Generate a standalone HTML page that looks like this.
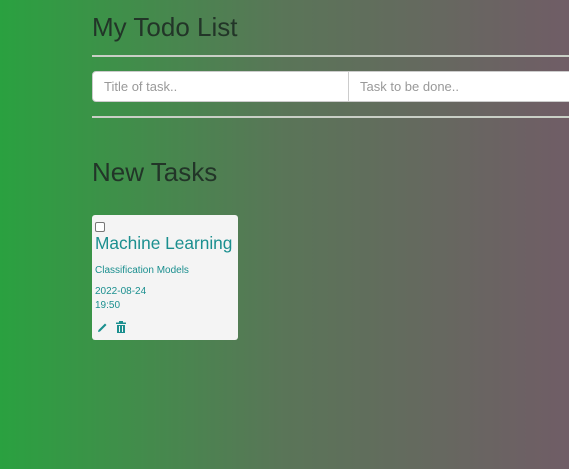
<!DOCTYPE html>
<html><head><style>
body{margin:0;width:569px;height:469px;overflow:hidden;background:linear-gradient(to right,#2aa140 0%,#3e9049 20%,#5a7558 50%,#705d66 100%);font-family:"Liberation Sans",sans-serif;position:relative}
.a{position:absolute}
h1{position:absolute;margin:0;font-weight:normal;font-size:26px;color:#223528;left:92px}
.hr{position:absolute;left:92px;right:0;height:1.5px;background:#c9cfc6}
.in{position:absolute;top:71px;height:31px;background:#fff;border:1px solid #ccc;box-sizing:border-box;font-size:13px;color:#999;line-height:30px;padding-left:11px}
.card{position:absolute;left:92px;top:215px;width:146px;height:125px;background:#f4f4f4;border-radius:3px;color:#1b8f8f}
</style></head><body>
<h1 style="top:12px">My Todo List</h1>
<div class="hr" style="top:55px"></div>
<div class="in" style="left:92px;width:257px;border-radius:4px 0 0 4px">Title of task..</div>
<div class="in" style="left:348px;width:230px">Task to be done..</div>
<div class="hr" style="top:116px"></div>
<h1 style="top:157px">New Tasks</h1>
<div class="card">
<div class="a" style="left:3px;top:7px;width:8px;height:8px;border:1px solid #777;border-radius:2px;background:#fff"></div>
<div class="a" style="left:3px;top:18px;font-size:17.3px;white-space:nowrap">Machine Learning</div>
<div class="a" style="left:3px;top:50px;font-size:10px">Classification Models</div>
<div class="a" style="left:3px;top:70px;font-size:10px;line-height:14px">2022-08-24<br>19:50</div>
<svg class="a" style="left:5px;top:107px" width="11" height="11" viewBox="0 0 11 11"><path d="M1 10 L1.5 8 L8 1.5 L9.5 3 L3 9.5 Z" fill="#1b8f8f"/></svg>
<svg class="a" style="left:24px;top:106px" width="10" height="12" viewBox="0 0 10 12"><rect x="0" y="1.5" width="10" height="1.5" fill="#1b8f8f"/><rect x="3" y="0" width="4" height="2" fill="#1b8f8f"/><path d="M1 4h8v8H1z M3 5v6h1V5z M6 5v6h1V5z" fill="#1b8f8f" fill-rule="evenodd"/></svg>
</div>
</body></html>
